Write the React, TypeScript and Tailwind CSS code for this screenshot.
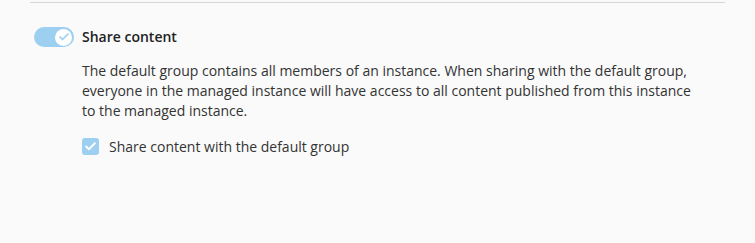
import { Check } from "lucide-react";

export default function App() {
  return (
    <main className="w-[755px] h-[243px] bg-[#fafafa] font-['Open_Sans',sans-serif] text-[#2b2b2b]">
      <div className="mx-[30px] h-[3px] border-b border-[#d6d6d6]" />
      <div className="pl-[34px] pt-[24px]">
        <div className="flex items-center gap-[8px]">
          <div className="flex h-[20px] w-[40px] items-center justify-end rounded-full bg-[#9dcff1] px-[2px]">
            <div className="flex h-[17px] w-[17px] items-center justify-center rounded-full bg-white">
              <Check size={12} strokeWidth={3.5} className="text-[#9dcff1]" />
            </div>
          </div>
          <span className="-mt-[1px] text-[14px] font-semibold text-[#222]">Share content</span>
        </div>
        <div className="pl-[48px] pt-[14px]">
          <p className="w-[620px] text-[14px] leading-[20px] text-[#333]">
            The default group contains all members of an instance. When sharing with the default group,
            everyone in the managed instance will have access to all content published from this instance
            to the managed instance.
          </p>
          <label className="mt-[15px] flex items-center gap-[10px]">
            <span className="flex h-[17px] w-[17px] items-center justify-center rounded-[3px] bg-[#9dcff1]">
              <Check size={13} strokeWidth={3.5} className="text-white" />
            </span>
            <span className="text-[14px] text-[#333]">Share content with the default group</span>
          </label>
        </div>
      </div>
    </main>
  );
}
